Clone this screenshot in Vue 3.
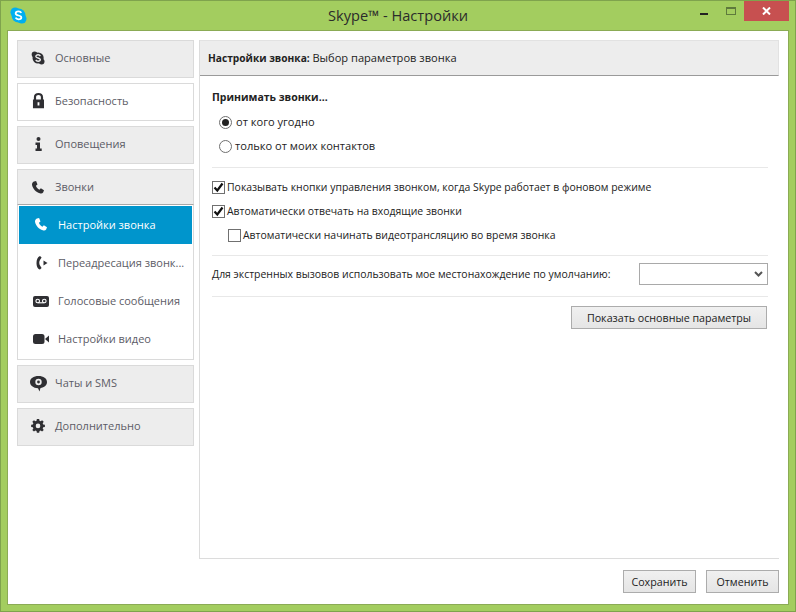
<script setup>
const phonePath = 'M5.2 1.5 L7.6 1 L9.2 5 L7.4 6.4 C8 8.4 9.4 10 11.4 11 L13 9.4 L16.6 11.4 L15.6 14.2 C14.8 15.4 13.2 15.4 11.8 15 C7.4 13.6 4 10 3 5.6 C2.7 3.8 3.6 2.2 5.2 1.5 Z'
</script>

<template>
  <div class="window">
    <header class="titlebar">
      <svg class="logo" width="17" height="17" viewBox="0 0 18 18">
        <circle cx="5.5" cy="5.5" r="5" fill="#00aff0" />
        <circle cx="12.5" cy="12.5" r="5" fill="#00aff0" />
        <circle cx="9" cy="9" r="7.4" fill="#00aff0" />
        <path d="M12 6.2C11.4 5.1 10.3 4.6 9 4.6 7.2 4.6 6 5.5 6 6.8c0 2.8 6 1.6 6 4.2 0 1.2-1.2 2-3 2-1.4 0-2.5-.6-3.1-1.7" fill="none" stroke="#fff" stroke-width="1.9" />
      </svg>
      <div class="title">Skype™ - Настройки</div>
      <div class="controls">
        <span class="min"></span>
        <span class="max"></span>
        <span class="close">
          <svg width="9" height="8" viewBox="0 0 9 8"><path d="M1 0.5 L8 7.5 M8 0.5 L1 7.5" stroke="#fff" stroke-width="2" /></svg>
        </span>
      </div>
    </header>

    <div class="client">
      <div class="body">
        <nav class="sidebar">
          <div class="nav-item">
            <svg class="ico" width="18" height="18" viewBox="0 0 18 18">
              <g transform="translate(0.9 1.8) scale(.8)">
                <circle cx="4.6" cy="4.6" r="3.6" fill="#2f2f33" /><circle cx="13.4" cy="13.4" r="3.6" fill="#2f2f33" /><circle cx="9" cy="9" r="7" fill="#2f2f33" />
                <path d="M11.8 6.6C11.3 5.6 10.2 5 9 5 7.4 5 6.2 5.8 6.2 7c0 2.6 5.600 1.400 5.600 4 0 1.200-1.200 2-2.800 2-1.300 0-2.400-.6-2.900-1.600" fill="none" stroke="#eee" stroke-width="1.700" />
              </g>
            </svg>
            <span>Основные</span>
          </div>
          <div class="nav-item white">
            <svg class="ico" width="18" height="18" viewBox="0 0 18 18">
              <path fill-rule="evenodd" d="M4 8V5.5C4 2.6 6 1 9 1s5 1.6 5 4.500V8h1v9.500H3V8Zm2.400 0h5.200V5.600C11.600 4 10.600 3.200 9 3.200S6.400 4 6.400 5.600ZM8 11v3.500h2V11Z" fill="#2f2f33" transform="translate(0.200 0.100) scale(.92)" />
            </svg>
            <span>Безопасность</span>
          </div>
          <div class="nav-item">
            <svg class="ico" width="18" height="18" viewBox="0 0 18 18">
              <circle cx="8.500" cy="4" r="2" fill="#2f2f33" />
              <path d="M5.500 7.500h4.500v6h1.700v2.500h-6.200v-2.500h1.500v-3.500h-1.500Z" fill="#2f2f33" />
            </svg>
            <span>Оповещения</span>
          </div>
          <div class="nav-item parent">
            <svg class="ico" width="18" height="18" viewBox="0 0 18 18"><path :d="phonePath" fill="#2f2f33" transform="translate(-.6 2.100) scale(.88)" /></svg>
            <span>Звонки</span>
          </div>
          <div class="subnav">
            <div class="sub-item active">
              <svg class="ico" width="18" height="18" viewBox="0 0 18 18"><path :d="phonePath" fill="#fff" transform="translate(-.6 1.100) scale(.88)" /></svg>
              <span>Настройки звонка</span>
            </div>
            <div class="sub-item">
              <svg class="ico" width="18" height="18" viewBox="0 0 18 18">
                <path d="M7 2 L8.600 3.500 L7 6 C6 7.500 6 10 7 11.500 L8.600 14 L7 15.500 C4.500 15 3.500 12 3.500 9 C3.500 6 4.500 3 7 2 Z" fill="#2f2f33" />
                <path d="M10.500 6.500 L14.500 9 L10.500 11.500 Z" fill="#2f2f33" />
              </svg>
              <span>Переадресация звонк...</span>
            </div>
            <div class="sub-item">
              <svg class="ico" width="18" height="18" viewBox="0 0 18 18">
                <rect x="0" y="4" width="16" height="11" rx="2" fill="#2f2f33" />
                <circle cx="4.700" cy="9" r="1.800" fill="none" stroke="#fff" stroke-width="1.100" />
                <circle cx="11.300" cy="9" r="1.800" fill="none" stroke="#fff" stroke-width="1.100" />
                <path d="M4.700 10.800h6.600" stroke="#fff" stroke-width="1.100" />
              </svg>
              <span>Голосовые сообщения</span>
            </div>
            <div class="sub-item">
              <svg class="ico" width="18" height="18" viewBox="0 0 18 18">
                <rect x="0" y="4" width="11.500" height="10" rx="2.500" fill="#2f2f33" />
                <path d="M12 9 L16 5.500 V12.500 Z" fill="#2f2f33" />
              </svg>
              <span>Настройки видео</span>
            </div>
          </div>
          <div class="nav-item">
            <svg class="ico" width="18" height="18" viewBox="0 0 18 18">
              <g transform="translate(-.5 .5)">
                <path d="M9 1.500C4 1.500 0.500 4 0.500 7.500 0.500 11 3.800 13.500 8.500 13.700L10 17 11 13.500C14.800 13 17.500 10.600 17.500 7.500 17.500 4 14 1.500 9 1.500Z" fill="#2f2f33" />
                <circle cx="9" cy="7.500" r="3.200" fill="#ededed" />
                <circle cx="9" cy="7.500" r="1.400" fill="#2f2f33" />
              </g>
            </svg>
            <span>Чаты и SMS</span>
          </div>
          <div class="nav-item">
            <svg class="ico" width="18" height="18" viewBox="0 0 18 18">
              <path fill-rule="evenodd" d="M7.500 0h3l.4 2.200 1.500.6 1.800-1.300 2.100 2.100-1.300 1.900.6 1.400 2.200.4v3l-2.200.4-.6 1.500 1.300 1.800-2.100 2.100-1.800-1.300-1.500.6-.4 2.200h-3l-.4-2.200-1.500-.6-1.800 1.300-2.100-2.100 1.300-1.800-.6-1.500-2.200-.4v-3l2.200-.4.6-1.400-1.300-1.900 2.100-2.100 1.800 1.300 1.500-.6ZM9 5.900a3 3 0 1 0 0 6 3 3 0 0 0 0-6Z" fill="#2f2f33" transform="translate(1 2) scale(.78)" />
            </svg>
            <span>Дополнительно</span>
          </div>
        </nav>

        <main class="panel">
          <div class="panel-head"><b>Настройки звонка:</b> <span class="sub">Выбор параметров звонка</span></div>
          <div class="panel-body">
            <div class="heading">Принимать звонки...</div>
            <label class="row radio-row"><span class="radio on"></span>от кого угодно</label>
            <label class="row radio-row"><span class="radio"></span>только от моих контактов</label>
            <hr class="first" />
            <label class="row"><span class="check on">
              <svg width="11" height="11" viewBox="0 0 11 11"><path d="M1.500 5.500 L4.300 8.500 L9.500 1.500" fill="none" stroke="#111" stroke-width="2.200" /></svg>
            </span>Показывать кнопки управления звонком, когда Skype работает в фоновом режиме</label>
            <label class="row"><span class="check on">
              <svg width="11" height="11" viewBox="0 0 11 11"><path d="M1.500 5.500 L4.300 8.500 L9.500 1.500" fill="none" stroke="#111" stroke-width="2.200" /></svg>
            </span>Автоматически отвечать на входящие звонки</label>
            <label class="row indent"><span class="check"></span>Автоматически начинать видеотрансляцию во время звонка</label>
            <hr class="second" />
            <div class="location">
              <span>Для экстренных вызовов использовать мое местонахождение по умолчанию:</span>
              <div class="select">
                <svg width="9" height="6" viewBox="0 0 9 6"><path d="M1 1 L4.500 4.500 L8 1" fill="none" stroke="#555" stroke-width="2" /></svg>
              </div>
            </div>
            <hr class="third" />
            <div class="basic-wrap"><button class="btn basic">Показать основные параметры</button></div>
          </div>
        </main>
      </div>
      <footer class="footer">
        <button class="btn">Сохранить</button>
        <button class="btn">Отменить</button>
      </footer>
    </div>
  </div>
</template>

<style>
html, body { margin: 0; padding: 0; }
</style>

<style scoped>
.window {
  width: 796px;
  height: 612px;
  box-sizing: border-box;
  background: #a3cd5f;
  border: 1px solid #7fa34d;
  display: flex;
  flex-direction: column;
  font-family: "Open Sans", "Noto Sans", sans-serif;
  font-size: 10.45px;
  color: #222;
  overflow: hidden;
}
.titlebar {
  height: 29px;
  flex: none;
  position: relative;
  display: flex;
  justify-content: center;
}
.logo { position: absolute; left: 9px; top: 6px; }
.title {
  font-size: 14.6px;
  color: #2b2b2b;
  line-height: 29px;
}
.controls {
  position: absolute;
  right: 6px;
  top: 0;
  display: flex;
  align-items: flex-start;
}
.min { width: 8px; height: 2px; background: #222; margin: 12px 18px 0 0; }
.max { width: 8px; height: 5px; border: 1px solid #5e7a3c; border-top-width: 2px; margin: 6px 8px 0 0; }
.close {
  width: 45px;
  height: 20px;
  background: #c75050;
  display: flex;
  align-items: center;
  justify-content: center;
}
.client {
  margin: 0 6px 6px 6px;
  flex: 1;
  background: #fff;
  border: 1px solid #8bab55;
  display: flex;
  flex-direction: column;
  min-height: 0;
}
.body {
  flex: 1;
  display: flex;
  padding: 9px 9px 0 9px;
  min-height: 0;
}
.sidebar {
  width: 177px;
  flex: none;
  display: flex;
  flex-direction: column;
  gap: 5px;
}
.nav-item {
  height: 38px;
  box-sizing: border-box;
  border: 1px solid #dadada;
  background: #ededed;
  display: flex;
  align-items: center;
  padding: 0 0 2px 12px;
  font-size: 11px;
  color: #5c5c66;
}
.nav-item span { margin-bottom: 2px; }
.nav-item.white { background: #fff; }
.nav-item.parent {
  height: 36px;
  padding-bottom: 0;
  border-bottom-color: #a8a8a8;
}
.nav-item .ico { margin-right: 7px; flex: none; }
.subnav {
  margin-top: -5px;
  height: 155px;
  box-sizing: border-box;
  border: 1px solid #dadada;
  border-top: 0;
  padding: 1px 1px 0;
  display: flex;
  flex-direction: column;
}
.sub-item {
  height: 38px;
  flex: none;
  display: flex;
  align-items: center;
  padding-left: 14px;
  color: #5c5c66;
  font-size: 11px;
}
.sub-item span { margin-bottom: 2px; }
.sub-item .ico { margin-right: 7px; flex: none; }
.sub-item.active { background: #0095cc; color: #fff; }
.panel {
  margin-left: 5px;
  flex: 1;
  border-left: 1px solid #dcdcdc;
  border-bottom: 1px solid #dcdcdc;
  display: flex;
  flex-direction: column;
}
.panel-head {
  height: 36px;
  box-sizing: border-box;
  background: #ededed;
  border: 1px solid #e2e2e2;
  border-left: 0;
  border-bottom: 1px solid #9a9a9a;
  line-height: 34px;
  padding-left: 8px;
  color: #222;
}
.panel-head b { font-size: 10.2px; }
.panel-head .sub { font-size: 11.1px; }
.panel-body { padding: 0 11px 0 12px; }
.heading { font-weight: 700; margin-top: 13px; height: 21px; line-height: 16px; font-size: 10.5px; }
.row {
  display: flex;
  align-items: center;
  height: 24px;
  line-height: 16px;
}
.radio-row { padding-left: 7px; font-size: 11.1px; }
.radio {
  width: 13px;
  height: 13px;
  box-sizing: border-box;
  border: 1px solid #707070;
  border-radius: 50%;
  background: #fff;
  margin-right: 3px;
  position: relative;
}
.radio.on { margin-right: 4px; }
.radio.on::after {
  content: "";
  position: absolute;
  inset: 2px;
  background: #222;
  border-radius: 50%;
}
.check {
  width: 13px;
  height: 13px;
  box-sizing: border-box;
  border: 1px solid #707070;
  background: #fff;
  margin-right: 2px;
  display: flex;
  align-items: center;
  justify-content: center;
  flex: none;
}
.indent { padding-left: 16px; }
hr { border: 0; border-top: 1px solid #e8e8e8; margin: 0; }
hr.first { margin: 9px 0 7px; }
hr.second { margin: 8px 0 0; }
hr.third { margin: 0; }
.location {
  height: 40px;
  box-sizing: border-box;
  padding-bottom: 4px;
  display: flex;
  align-items: center;
  justify-content: space-between;
}
.select {
  width: 129px;
  height: 22px;
  box-sizing: border-box;
  border: 1px solid #a9a9a9;
  background: #fff;
  display: flex;
  align-items: center;
  justify-content: flex-end;
  padding-right: 4px;
}
.basic-wrap { display: flex; justify-content: flex-end; padding: 9px 1px 0 0; }
.btn {
  font: inherit;
  font-size: 10.7px;
  color: #222;
  height: 23px;
  width: 73px;
  padding: 0;
  border: 1px solid #acacac;
  background: linear-gradient(#f0f0f0, #e5e5e5);
}
.basic { width: 196px; }
.footer {
  height: 45px;
  box-sizing: border-box;
  flex: none;
  display: flex;
  justify-content: flex-end;
  align-items: flex-start;
  gap: 10px;
  padding: 11px 9px 0 0;
}
</style>
